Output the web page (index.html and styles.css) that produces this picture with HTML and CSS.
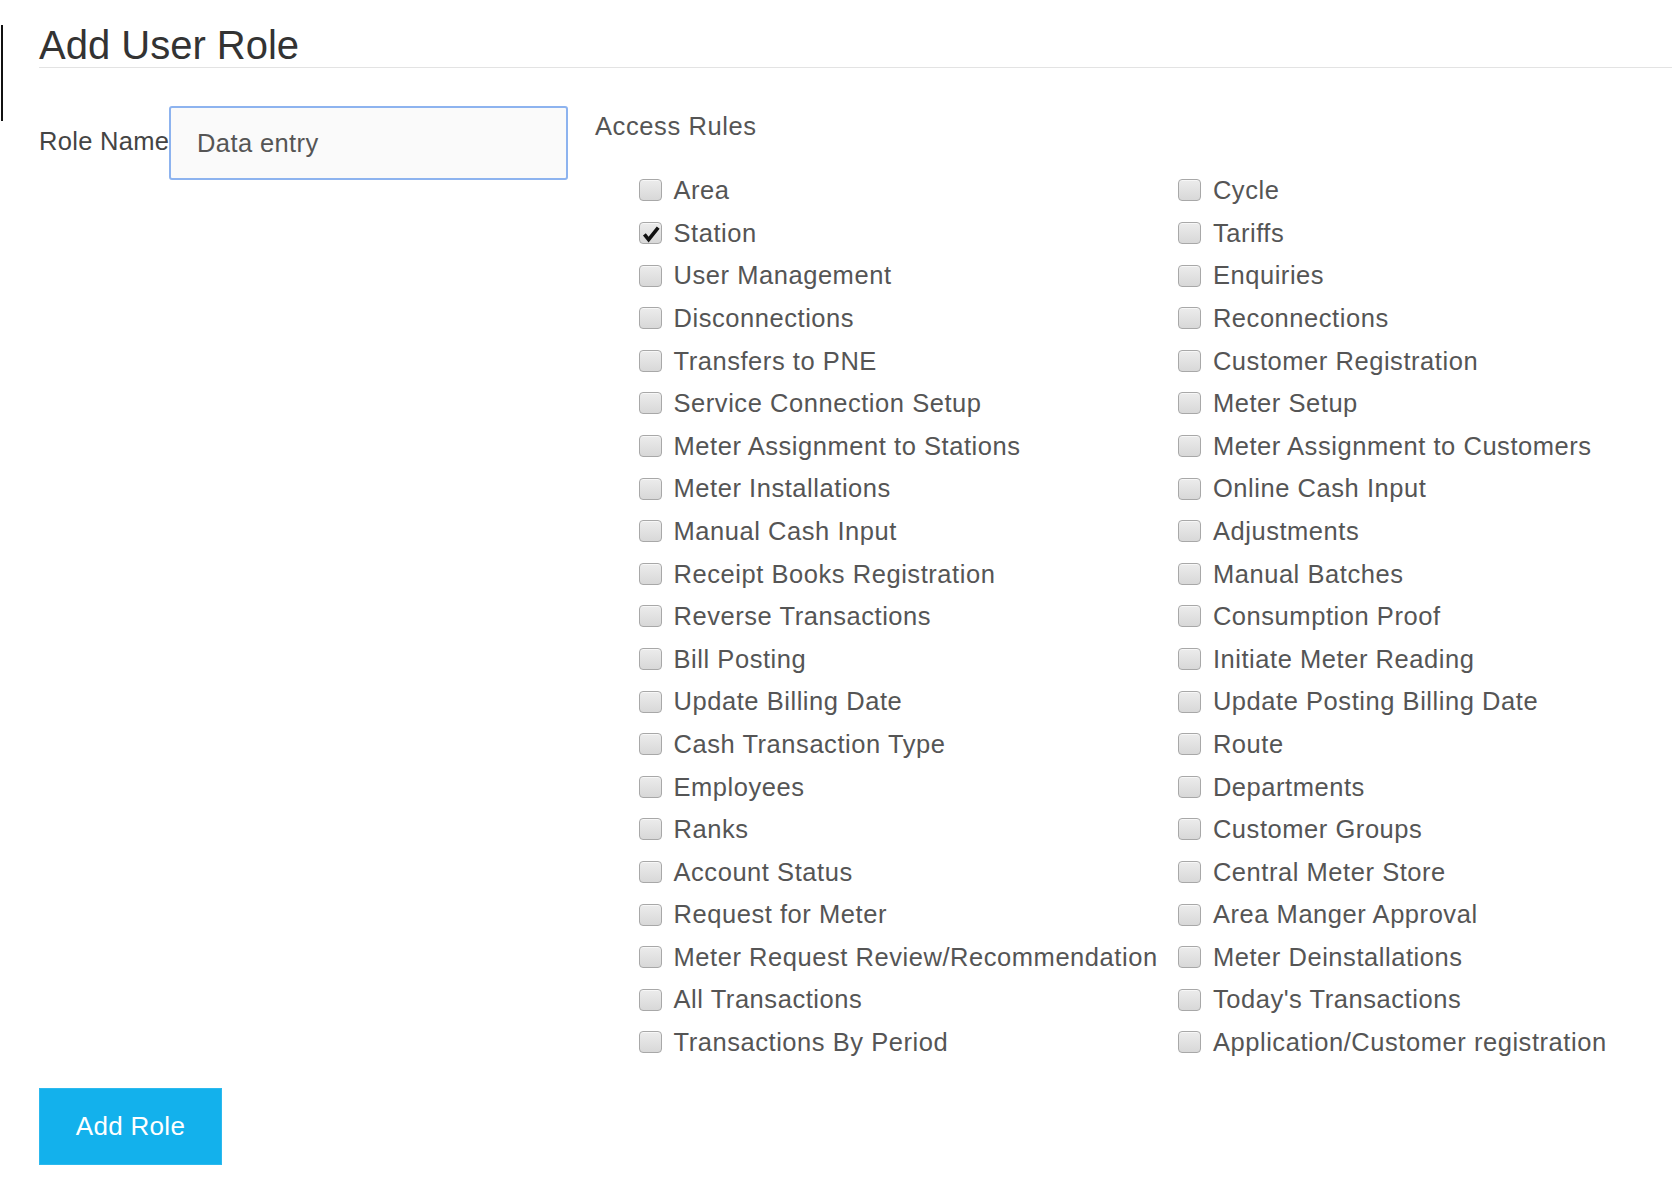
FILE: index.html
```html
<!DOCTYPE html>
<html lang="en">
<head>
<meta charset="utf-8">
<title>Add User Role</title>
<link rel="stylesheet" href="styles.css">
</head>
<body>
<div class="page">
  <div class="edge-bar"></div>
  <main class="main">
    <h1 class="title">Add User Role</h1>
    <form class="form">
      <div class="form-row">
        <label class="role-label" for="role">Role Name</label>
        <input class="role-input" id="role" type="text" value="Data entry">
        <div class="access">
          <div class="access-title">Access Rules</div>
          <div class="rules">
            <label class="rule"><span class="box"></span><span class="rule-text">Area</span></label>
            <label class="rule"><span class="box"></span><span class="rule-text">Cycle</span></label>
            <label class="rule"><span class="box checked"><svg viewBox="0 0 23 22" width="23" height="22"><path d="M5.4 12.4 L9.6 17.6 L19.2 5.6" fill="none" stroke="#111" stroke-width="3.6" stroke-linejoin="miter" stroke-linecap="butt"/></svg></span><span class="rule-text">Station</span></label>
            <label class="rule"><span class="box"></span><span class="rule-text">Tariffs</span></label>
            <label class="rule"><span class="box"></span><span class="rule-text">User Management</span></label>
            <label class="rule"><span class="box"></span><span class="rule-text">Enquiries</span></label>
            <label class="rule"><span class="box"></span><span class="rule-text">Disconnections</span></label>
            <label class="rule"><span class="box"></span><span class="rule-text">Reconnections</span></label>
            <label class="rule"><span class="box"></span><span class="rule-text">Transfers to PNE</span></label>
            <label class="rule"><span class="box"></span><span class="rule-text">Customer Registration</span></label>
            <label class="rule"><span class="box"></span><span class="rule-text">Service Connection Setup</span></label>
            <label class="rule"><span class="box"></span><span class="rule-text">Meter Setup</span></label>
            <label class="rule"><span class="box"></span><span class="rule-text">Meter Assignment to Stations</span></label>
            <label class="rule"><span class="box"></span><span class="rule-text">Meter Assignment to Customers</span></label>
            <label class="rule"><span class="box"></span><span class="rule-text">Meter Installations</span></label>
            <label class="rule"><span class="box"></span><span class="rule-text">Online Cash Input</span></label>
            <label class="rule"><span class="box"></span><span class="rule-text">Manual Cash Input</span></label>
            <label class="rule"><span class="box"></span><span class="rule-text">Adjustments</span></label>
            <label class="rule"><span class="box"></span><span class="rule-text">Receipt Books Registration</span></label>
            <label class="rule"><span class="box"></span><span class="rule-text">Manual Batches</span></label>
            <label class="rule"><span class="box"></span><span class="rule-text">Reverse Transactions</span></label>
            <label class="rule"><span class="box"></span><span class="rule-text">Consumption Proof</span></label>
            <label class="rule"><span class="box"></span><span class="rule-text">Bill Posting</span></label>
            <label class="rule"><span class="box"></span><span class="rule-text">Initiate Meter Reading</span></label>
            <label class="rule"><span class="box"></span><span class="rule-text">Update Billing Date</span></label>
            <label class="rule"><span class="box"></span><span class="rule-text">Update Posting Billing Date</span></label>
            <label class="rule"><span class="box"></span><span class="rule-text">Cash Transaction Type</span></label>
            <label class="rule"><span class="box"></span><span class="rule-text">Route</span></label>
            <label class="rule"><span class="box"></span><span class="rule-text">Employees</span></label>
            <label class="rule"><span class="box"></span><span class="rule-text">Departments</span></label>
            <label class="rule"><span class="box"></span><span class="rule-text">Ranks</span></label>
            <label class="rule"><span class="box"></span><span class="rule-text">Customer Groups</span></label>
            <label class="rule"><span class="box"></span><span class="rule-text">Account Status</span></label>
            <label class="rule"><span class="box"></span><span class="rule-text">Central Meter Store</span></label>
            <label class="rule"><span class="box"></span><span class="rule-text">Request for Meter</span></label>
            <label class="rule"><span class="box"></span><span class="rule-text">Area Manger Approval</span></label>
            <label class="rule"><span class="box"></span><span class="rule-text">Meter Request Review/Recommendation</span></label>
            <label class="rule"><span class="box"></span><span class="rule-text">Meter Deinstallations</span></label>
            <label class="rule"><span class="box"></span><span class="rule-text">All Transactions</span></label>
            <label class="rule"><span class="box"></span><span class="rule-text">Today's Transactions</span></label>
            <label class="rule"><span class="box"></span><span class="rule-text">Transactions By Period</span></label>
            <label class="rule"><span class="box"></span><span class="rule-text">Application/Customer registration</span></label>
          </div>
        </div>
      </div>
      <button class="add-btn" type="button">Add Role</button>
    </form>
  </main>
</div>
</body>
</html>
```

FILE: styles.css
```css
* {
  box-sizing: border-box;
}

html, body {
  margin: 0;
  padding: 0;
  background: #ffffff;
}

body {
  font-family: "Liberation Sans", Arial, sans-serif;
  color: #555555;
}

.page {
  display: flex;
  align-items: flex-start;
  min-height: 1186px;
}

.edge-bar {
  flex: 0 0 2px;
  width: 2px;
  height: 96px;
  margin-top: 25px;
  margin-left: 1px;
  background: #111111;
}

.main {
  flex: 1 1 auto;
  margin-left: 36px;
}

.title {
  margin: 24px 0 0 0;
  font-size: 40px;
  line-height: 43px;
  font-weight: normal;
  color: #333333;
  border-bottom: 1px solid #e3e3e3;
}

.form {
  margin: 38px 0 0 0;
}

.form-row {
  display: flex;
  align-items: flex-start;
}

.role-label {
  flex: 0 0 130px;
  width: 130px;
  margin-top: 19.5px;
  font-size: 25.5px;
  line-height: 30px;
  letter-spacing: 0.3px;
  color: #444444;
  white-space: nowrap;
}

.role-input {
  flex: 0 0 399px;
  width: 399px;
  height: 74px;
  margin: 0;
  padding: 0 0 0 26px;
  border: 2.5px solid #8db3ef;
  border-radius: 3px;
  background: #fafafa;
  font-family: "Liberation Sans", Arial, sans-serif;
  font-size: 25.5px;
  letter-spacing: 0.4px;
  color: #555555;
  outline: none;
}

.access {
  margin-left: 27px;
  margin-top: 5px;
}

.access-title {
  font-size: 25.5px;
  line-height: 30px;
  letter-spacing: 0.6px;
  color: #555555;
}

.rules {
  display: grid;
  grid-template-columns: 539.4px auto;
  grid-auto-rows: 42.6px;
  margin-top: 28.2px;
  padding-left: 44px;
}

.rule {
  display: flex;
  align-items: center;
  gap: 11.5px;
  font-size: 25.5px;
  line-height: 42.6px;
  letter-spacing: 0.55px;
  color: #555555;
  white-space: nowrap;
}

.box {
  flex: 0 0 23px;
  width: 23px;
  height: 22px;
  border: 1.5px solid #a8a8a8;
  border-radius: 4px;
  background: linear-gradient(#ececec, #d8d8d8);
  box-shadow: inset 0 1px 0 rgba(255, 255, 255, 0.6);
  position: relative;
}

.box svg {
  position: absolute;
  left: -1.5px;
  top: -1.5px;
  display: block;
}

.add-btn {
  display: block;
  width: 183px;
  height: 77px;
  margin: 24.2px 0 0 0;
  padding: 0;
  border: 1px solid #2cb9ee;
  background: #13b1ec;
  color: #ffffff;
  font-family: "Liberation Sans", Arial, sans-serif;
  font-size: 26px;
  letter-spacing: 0.3px;
  cursor: pointer;
}
```
